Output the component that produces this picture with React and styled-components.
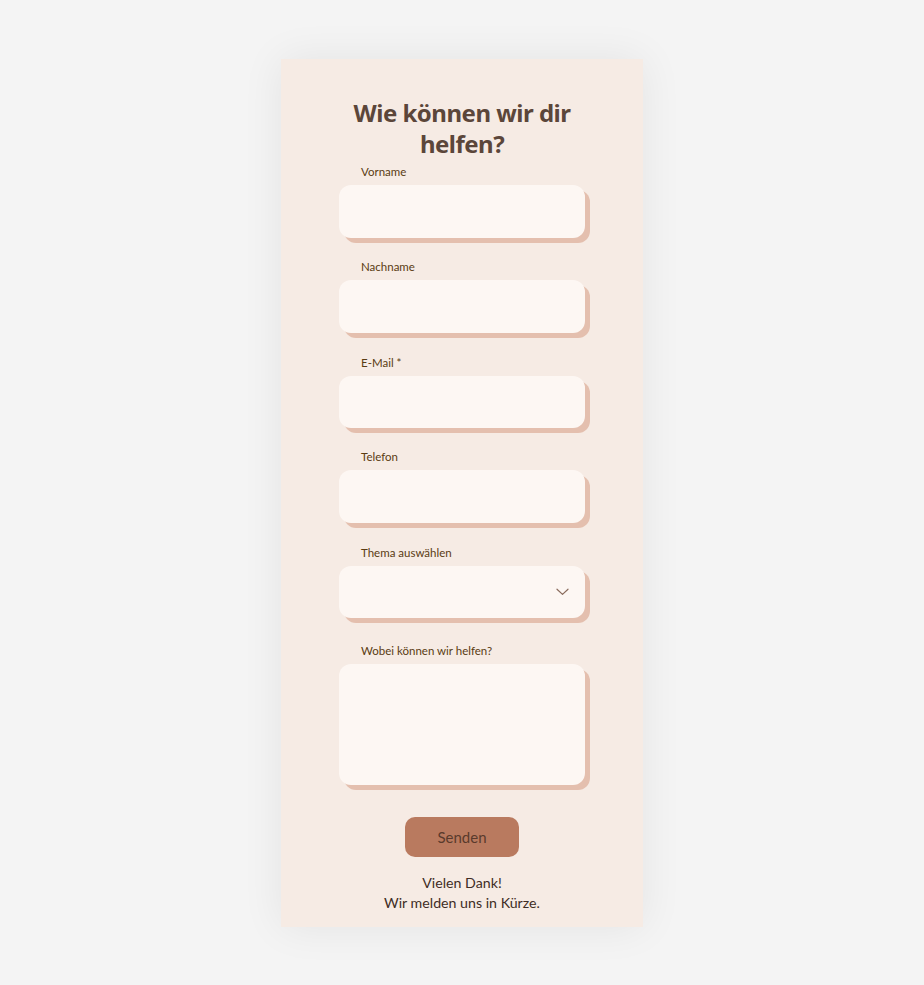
import React from 'react';
import styled, { createGlobalStyle } from 'styled-components';

const GlobalStyle = createGlobalStyle`
  html, body {
    margin: 0;
    padding: 0;
    background: #f4f4f4;
  }
  * {
    box-sizing: border-box;
  }
`;

const Page = styled.div`
  display: flex;
  justify-content: center;
  padding-top: 59px;
  padding-bottom: 58px;
`;

const Card = styled.div`
  width: 362px;
  background: #f6ebe4;
  box-shadow: 0 0 40px rgba(0, 0, 0, 0.07);
  padding: 38px 0 14px;
  display: flex;
  flex-direction: column;
  align-items: center;
`;

const Title = styled.h1`
  margin: 0;
  width: 260px;
  text-align: center;
  font-family: 'Noto Sans', sans-serif;
  font-weight: 700;
  font-size: 24px;
  line-height: 31px;
  color: #5b463a;
  letter-spacing: -0.5px;
`;

const Form = styled.form`
  margin-top: 6px;
  display: flex;
  flex-direction: column;
  gap: 22px;
  width: 246px;
`;

const Field = styled.div`
  display: flex;
  flex-direction: column;
  margin-top: ${(p) => p.$mt || 0}px;
`;

const Label = styled.label`
  font-family: 'Lato', sans-serif;
  font-size: 11.5px;
  line-height: 14px;
  color: #5a3b12;
  padding-left: 22px;
  margin-bottom: 6px;
`;

const boxStyle = `
  width: 246px;
  border: none;
  border-radius: 12px;
  background: #fdf7f3;
  box-shadow: 5px 5px 0 #e4bfae;
  outline: none;
  font-family: 'Lato', sans-serif;
  font-size: 14px;
  color: #3f2d25;
  padding: 0 18px;
`;

const Input = styled.input`
  ${boxStyle}
  height: ${(p) => p.$h || 53}px;
`;

const SelectBox = styled.div`
  ${boxStyle}
  height: 52px;
  display: flex;
  align-items: center;
  justify-content: flex-end;
  padding-right: 16px;
`;

const TextArea = styled.textarea`
  ${boxStyle}
  height: 121px;
  resize: none;
  padding-top: 14px;
`;

const Button = styled.button`
  margin-top: 32px;
  width: 114px;
  height: 40px;
  border: none;
  border-radius: 10px;
  background: #b97a5f;
  color: #5a3a2c;
  font-family: 'Lato', sans-serif;
  font-size: 15px;
`;

const Thanks = styled.p`
  margin: 16px 0 0;
  text-align: center;
  font-family: 'Lato', sans-serif;
  font-size: 14.2px;
  line-height: 20px;
  color: #3f2d25;
`;

const Chevron = () => (
  <svg width="13" height="8" viewBox="0 0 13 8" fill="none">
    <path d="M1 1.2 L6.5 6.4 L12 1.2" stroke="#8a6b5c" strokeWidth="1.2" strokeLinecap="round" strokeLinejoin="round" />
  </svg>
);

export default function App() {
  return (
    <>
      <GlobalStyle />
      <Page>
        <Card>
          <Title>Wie können wir dir helfen?</Title>
          <Form onSubmit={(e) => e.preventDefault()}>
            <Field>
              <Label>Vorname</Label>
              <Input />
            </Field>
            <Field>
              <Label>Nachname</Label>
              <Input />
            </Field>
            <Field $mt={1}>
              <Label>E-Mail *</Label>
              <Input $h={52} />
            </Field>
            <Field>
              <Label>Telefon</Label>
              <Input />
            </Field>
            <Field $mt={1}>
              <Label>Thema auswählen</Label>
              <SelectBox>
                <Chevron />
              </SelectBox>
            </Field>
            <Field $mt={4}>
              <Label>Wobei können wir helfen?</Label>
              <TextArea />
            </Field>
          </Form>
          <Button type="button">Senden</Button>
          <Thanks>
            Vielen Dank!
            <br />
            Wir melden uns in Kürze.
          </Thanks>
        </Card>
      </Page>
    </>
  );
}
